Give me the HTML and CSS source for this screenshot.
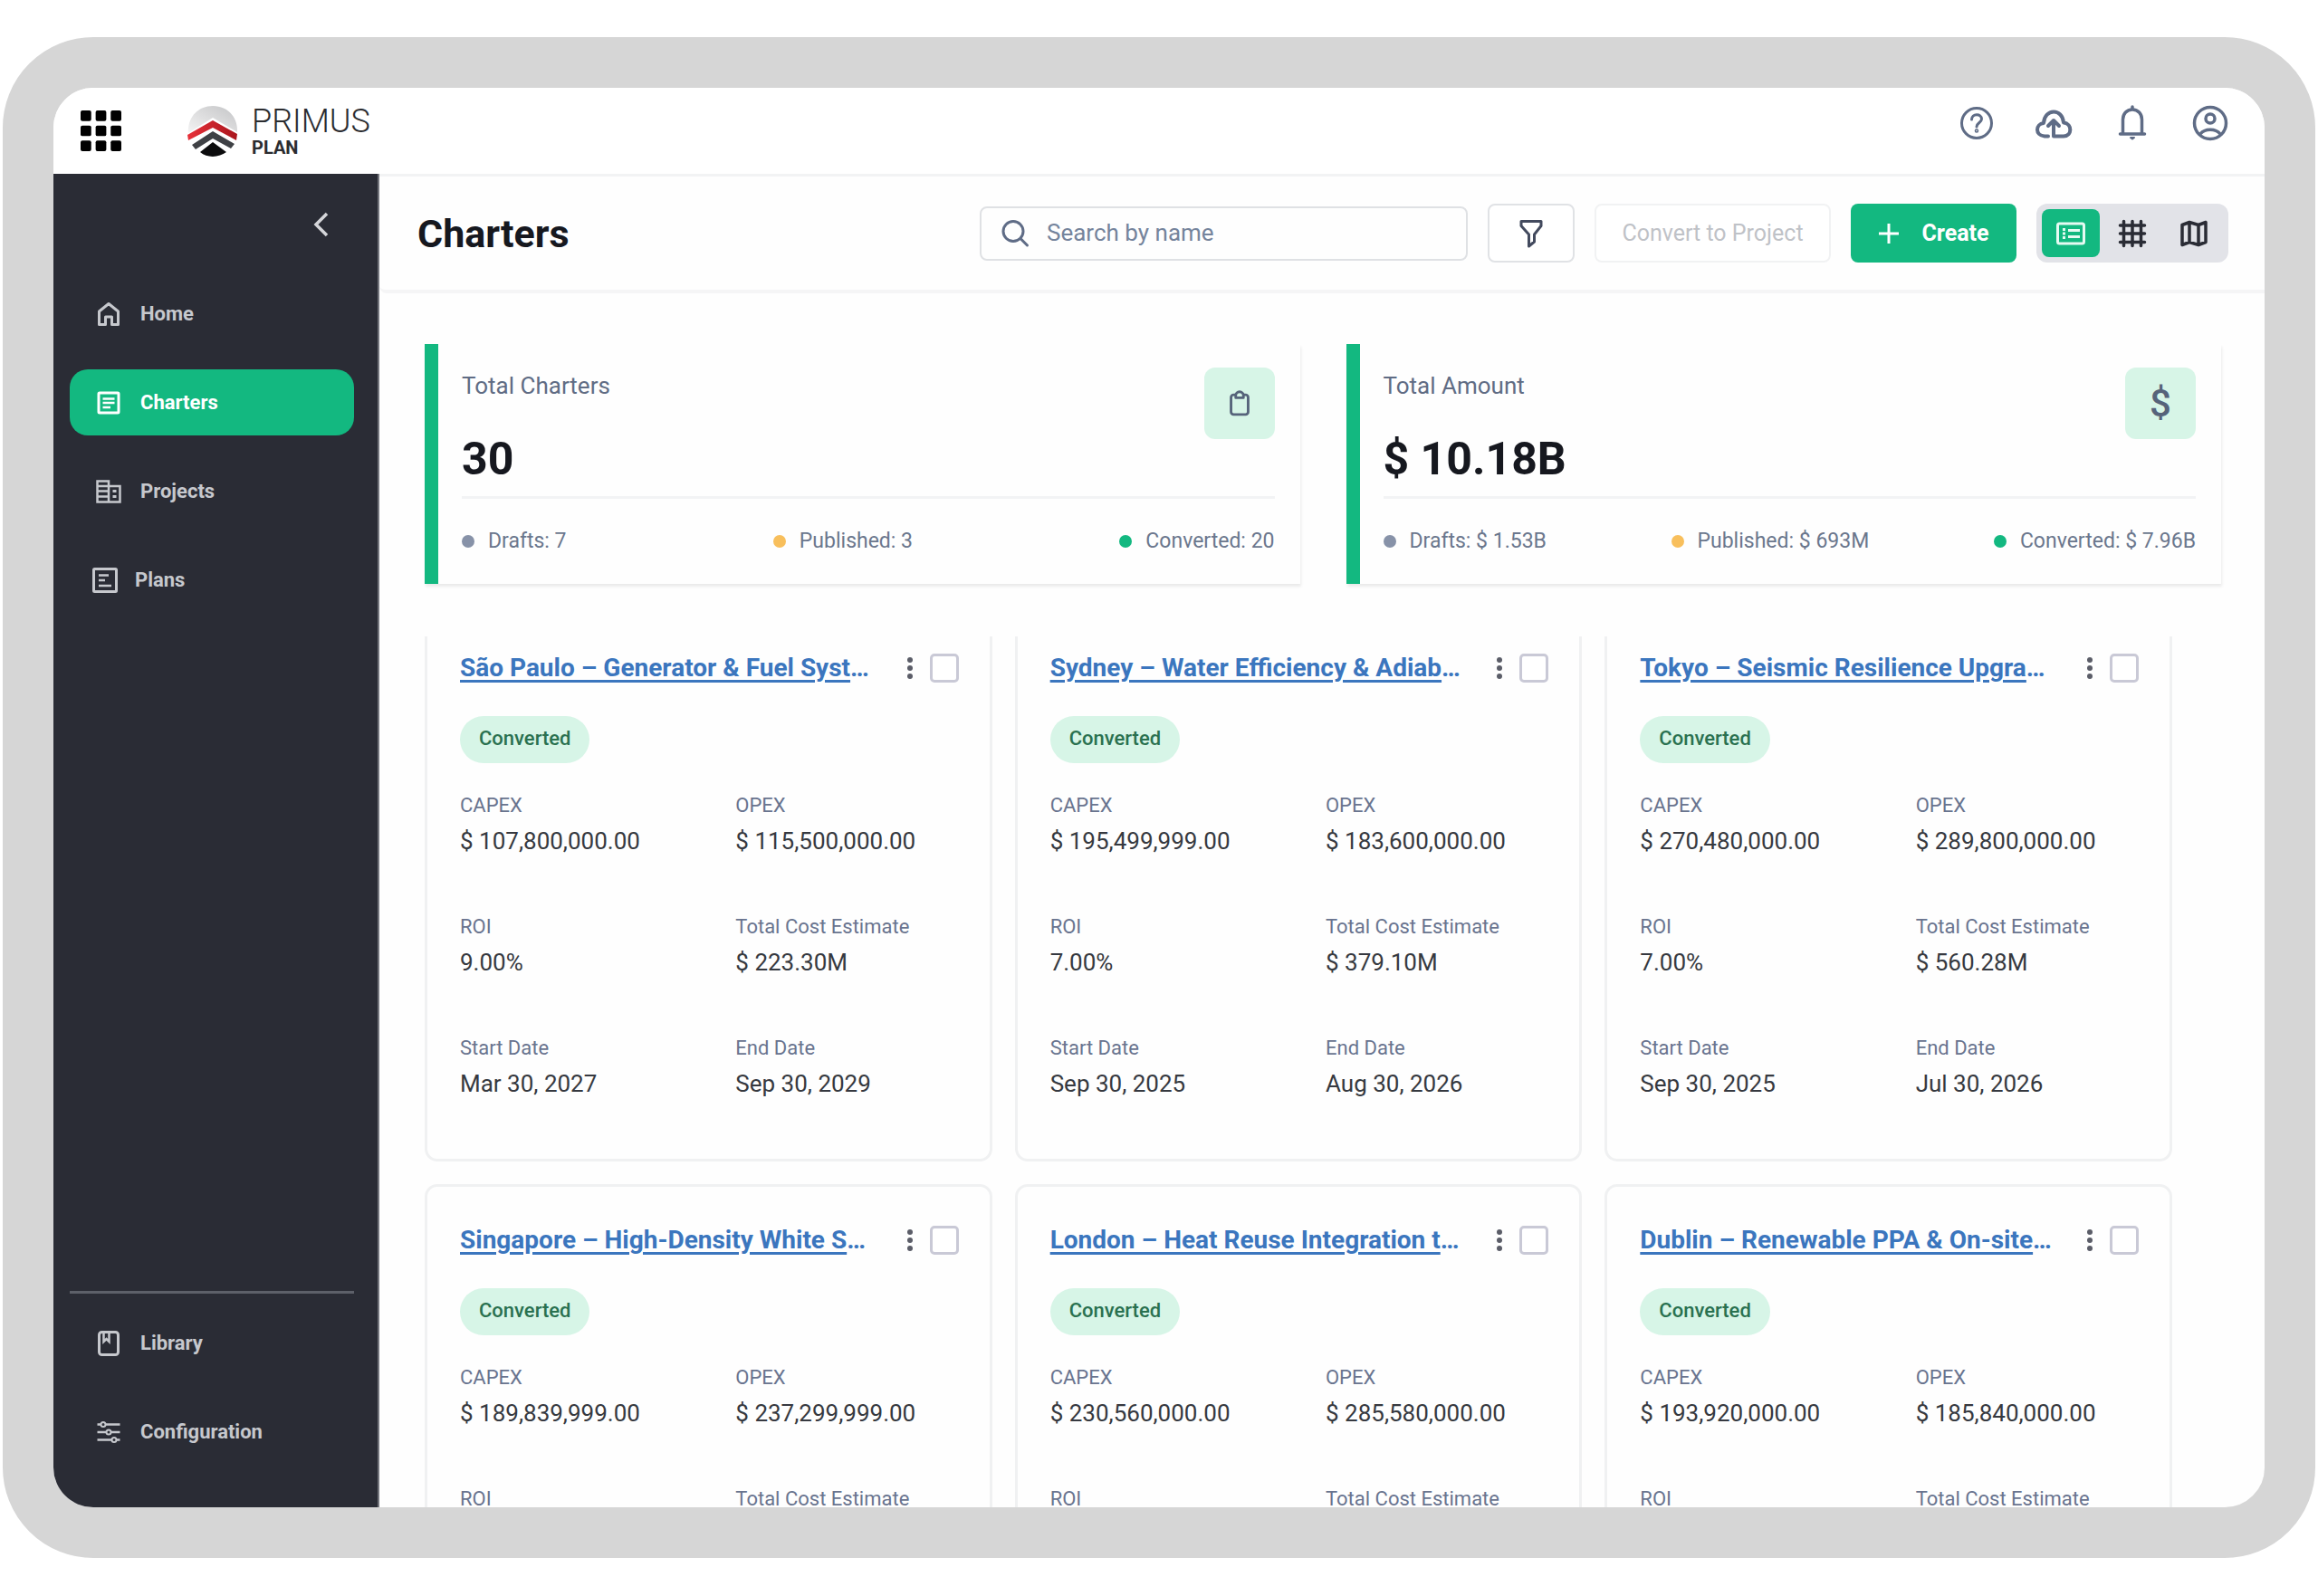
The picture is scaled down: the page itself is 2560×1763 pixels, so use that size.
FILE: index.html
```html
<!DOCTYPE html>
<html lang="en">
<head>
    <meta charset="UTF-8">
    <meta name="viewport" content="width=device-width, initial-scale=1.0">
    <title>Charters - Primus Plan</title>
    <link rel="stylesheet" href="styles.css">
</head>
<body>
    <div class="device">
        <header class="topbar">
            <button class="icon-button apps-button" aria-label="Apps">
                <svg width="45" height="45" viewBox="0 0 46 46" fill="#000">
                    <rect x="0" y="0" width="12" height="12" rx="2"/><rect x="17" y="0" width="12" height="12" rx="2"/><rect x="34" y="0" width="12" height="12" rx="2"/>
                    <rect x="0" y="17" width="12" height="12" rx="2"/><rect x="17" y="17" width="12" height="12" rx="2"/><rect x="34" y="17" width="12" height="12" rx="2"/>
                    <rect x="0" y="34" width="12" height="12" rx="2"/><rect x="17" y="34" width="12" height="12" rx="2"/><rect x="34" y="34" width="12" height="12" rx="2"/>
                </svg>
            </button>
            <a class="brand" href="#">
                <svg width="56" height="56" viewBox="0 0 56 56">
                    <defs>
                        <linearGradient id="dome" x1="0" y1="1" x2="1" y2="0">
                            <stop offset="0" stop-color="#f4f4f4"/>
                            <stop offset="0.5" stop-color="#dcdcdd"/>
                            <stop offset="1" stop-color="#c3c4c6"/>
                        </linearGradient>
                        <linearGradient id="red" x1="0" y1="0" x2="1" y2="0">
                            <stop offset="0" stop-color="#e8313a"/>
                            <stop offset="1" stop-color="#a9151c"/>
                        </linearGradient>
                    </defs>
                    <path d="M1 30C0 12 12 0 28 0s28 12 27 29L28 13z" fill="url(#dome)"/>
                    <path d="M0 32L28 16l27 15-1 7-26-14L1 38z" fill="url(#red)"/>
                    <path d="M5 43l23-15 24 14-4 5-20-11L9 48z" fill="#3f4145"/>
                    <path d="M14 51l14-11 15 11c-8 6-21 7-29 0z" fill="#0c0c0d"/>
                </svg>
                <span class="brand-text">
                    <span class="brand-name">PRIMUS</span>
                    <span class="brand-product">PLAN</span>
                </span>
            </a>
            <div class="topbar-actions">
                <button class="icon-button" aria-label="Help">
                    <svg width="44" height="44" viewBox="0 0 44 44" fill="none" stroke="#5f6c86" stroke-width="3" stroke-linecap="round">
                        <circle cx="22" cy="22" r="16.5"/>
                        <path d="M16.500 18c0-7 11-7 11-.5 0 4-5.500 4-5.500 8.500"/>
                        <circle cx="22" cy="30.500" r="0.800"/>
                    </svg>
                </button>
                <button class="icon-button" aria-label="Upload">
                    <svg width="44" height="44" viewBox="0 0 44 44" fill="none" stroke="#5f6c86" stroke-width="4" stroke-linecap="round" stroke-linejoin="round">
                        <path d="M15 36.500h-4C0 35.500 1 23 10 22 11 5.500 31 5.500 32 21.500c10 1 9.500 15 0 15H21V20"/>
                        <path d="M15 25l6-6 6 6"/>
                    </svg>
                </button>
                <button class="icon-button" aria-label="Notifications">
                    <svg width="44" height="44" viewBox="0 0 44 44" fill="none" stroke="#5f6c86" stroke-width="3.500" stroke-linecap="round" stroke-linejoin="round">
                        <path d="M8.500 34h27M11.500 33.500V18c0-6 4-11 10.500-11s10.500 5 10.500 11v15.500M22 6V4"/>
                        <path d="M20 38h4l-2 1.500z" fill="#5f6c86" stroke-width="2"/>
                    </svg>
                </button>
                <button class="icon-button" aria-label="Account">
                    <svg width="44" height="44" viewBox="0 0 44 44" fill="none" stroke="#5f6c86" stroke-width="3.500">
                        <circle cx="22" cy="22" r="17.500"/>
                        <circle cx="22" cy="17" r="5"/>
                        <path d="M11 34c5-6.500 17-6.500 22 0"/>
                    </svg>
                </button>
            </div>
        </header>

        <div class="workspace">
            <nav class="sidebar">
                <button class="icon-button collapse-button" aria-label="Collapse menu">
                    <svg width="20" height="30" viewBox="0 0 20 30" fill="none" stroke="#d5d6da" stroke-width="3.500"><path d="M16 3L4 15l12 12"/></svg>
                </button>
                <a class="nav-item" href="#">
                    <svg width="30" height="30" viewBox="0 0 30 30" fill="none" stroke="currentColor" stroke-width="3" stroke-linejoin="round">
                        <path d="M4.500 12L15 3.500 25.500 12v14.500h-7V18h-7v8.500h-7z"/>
                    </svg>
                    Home
                </a>
                <a class="nav-item active" href="#">
                    <svg width="30" height="30" viewBox="0 0 30 30" fill="none" stroke="currentColor" stroke-width="3">
                        <rect x="4" y="4" width="22" height="22" rx="1"/>
                        <path d="M8.500 10.500h13M8.500 15h13M8.500 20h8.500" stroke-width="2.500"/>
                    </svg>
                    Charters
                </a>
                <a class="nav-item" href="#">
                    <svg width="30" height="30" viewBox="0 0 30 30" fill="none" stroke="currentColor" stroke-width="2.500">
                        <path d="M2.500 3.500H15v23H2.500zM15 9h12.500v17.500H15M2.500 9H15M2.500 14.500H15M2.500 20.500H15"/>
                        <path d="M19.500 14.500h4M19.500 20.500h4" stroke-width="3"/>
                    </svg>
                    Projects
                </a>
                <a class="nav-item compact" href="#">
                    <svg width="30" height="30" viewBox="0 0 30 30" fill="none" stroke="currentColor" stroke-width="3">
                        <rect x="2.500" y="2.500" width="25" height="25" rx="1"/>
                        <path d="M8 9.500h11M8 15h7M8 21h14" stroke-width="2.500"/>
                    </svg>
                    Plans
                </a>
                <div class="nav-footer">
                    <a class="nav-item" href="#">
                        <svg width="30" height="30" viewBox="0 0 30 30" fill="none" stroke="currentColor" stroke-width="3">
                            <rect x="4.500" y="2.500" width="21" height="25" rx="3"/>
                            <path d="M9.500 3v10l3-3 3 3V3" stroke-width="2.500"/>
                        </svg>
                        Library
                    </a>
                    <a class="nav-item" href="#">
                        <svg width="30" height="30" viewBox="0 0 30 30" fill="none" stroke="currentColor" stroke-width="2.500">
                            <path d="M2.500 6.500H6M12 6.500h15.500M2.500 15H12M18 15h9.500M2.500 23.500H18M24 23.500h3.500"/>
                            <circle cx="9" cy="6.500" r="2.500" stroke-width="2"/><circle cx="15" cy="15" r="2.500" stroke-width="2"/><circle cx="21" cy="23.500" r="2.500" stroke-width="2"/>
                        </svg>
                        Configuration
                    </a>
                </div>
            </nav>

            <main class="main">
                <div class="page-header">
                    <h1>Charters</h1>
                    <label class="search">
                        <svg width="34" height="34" viewBox="0 0 34 34" fill="none" stroke="#5f6c86" stroke-width="3" stroke-linecap="round">
                            <circle cx="15" cy="14.500" r="11"/><path d="M23 22.500l7.500 7.500"/>
                        </svg>
                        <input type="text" placeholder="Search by name" aria-label="Search by name">
                    </label>
                    <button class="btn filter-button" aria-label="Filter">
                        <svg width="34" height="34" viewBox="0 0 34 34" fill="none" stroke="#434a5e" stroke-width="3" stroke-linejoin="round">
                            <path d="M6 3.500h22v5L20.500 18v8L14.500 31V18L6 8.500z"/>
                        </svg>
                    </button>
                    <button class="btn convert-button" disabled>Convert to Project</button>
                    <button class="btn create-button">
                        <svg width="24" height="24" viewBox="0 0 24 24" stroke="#fff" stroke-width="3"><path d="M12 1v22M1 12h22"/></svg>
                        Create
                    </button>
                    <div class="view-switch">
                        <button class="view-button selected" aria-label="Card view">
                            <svg width="34" height="34" viewBox="0 0 34 34" fill="none" stroke="currentColor" stroke-width="3">
                                <rect x="2.500" y="6" width="29" height="22" rx="2"/>
                                <path d="M8 12.500h3M8 17h3M8 21.500h3M14 13.500h13M14 20.500h13"/>
                            </svg>
                        </button>
                        <button class="view-button" aria-label="Table view">
                            <svg width="34" height="34" viewBox="0 0 34 34" fill="none" stroke="currentColor" stroke-width="3.500" stroke-linecap="round">
                                <path d="M7.500 3.500v27M17 3.500v27M26.500 3.500v27M3.500 8h27M3.500 17h27M3.500 26.500h27"/>
                            </svg>
                        </button>
                        <button class="view-button" aria-label="Map view">
                            <svg width="34" height="34" viewBox="0 0 34 34" fill="none" stroke="currentColor" stroke-width="3.500" stroke-linejoin="round">
                                <path d="M4 7.500l8-3 10 3 8-3v22l-8 3-10-3-8 3zM12 5v21M22 8v21"/>
                            </svg>
                        </button>
                    </div>
                </div>

                <section class="stats">
                    <div class="stat-card">
                        <div class="stat-top">
                            <div>
                                <h2>Total Charters</h2>
                                <p class="stat-value">30</p>
                            </div>
                            <span class="stat-icon">
                                <svg width="34" height="34" viewBox="0 0 36 36" fill="none" stroke="#56637a" stroke-width="3" stroke-linejoin="round">
                                    <rect x="8" y="7.500" width="20" height="23" rx="3"/>
                                    <path d="M13.500 8.500a4.500 4.500 0 0 1 9 0V11h-9z" fill="#d7f5e7"/>
                                </svg>
                            </span>
                        </div>
                        <ul class="stat-legend">
                            <li class="drafts">Drafts: 7</li>
                            <li class="published">Published: 3</li>
                            <li class="converted">Converted: 20</li>
                        </ul>
                    </div>
                    <div class="stat-card">
                        <div class="stat-top">
                            <div>
                                <h2>Total Amount</h2>
                                <p class="stat-value">$ 10.18B</p>
                            </div>
                            <span class="stat-icon">$</span>
                        </div>
                        <ul class="stat-legend">
                            <li class="drafts">Drafts: $ 1.53B</li>
                            <li class="published">Published: $ 693M</li>
                            <li class="converted">Converted: $ 7.96B</li>
                        </ul>
                    </div>
                </section>

                <!-- Scrolling list of charters -->
                <div class="charter-scroll">
                    <div class="charter-grid">
                        <article class="charter">
                            <div class="charter-head">
                                <h3><a href="#">São Paulo – Generator &amp; Fuel Syst</a>…</h3>
                                <button class="icon-button more-button" aria-label="More"><span></span><span></span><span></span></button>
                                <input type="checkbox" aria-label="Select São Paulo">
                            </div>
                            <span class="badge">Converted</span>
                            <dl>
                                <div><dt>CAPEX</dt><dd>$ 107,800,000.00</dd></div>
                                <div><dt>OPEX</dt><dd>$ 115,500,000.00</dd></div>
                                <div><dt>ROI</dt><dd>9.00%</dd></div>
                                <div><dt>Total Cost Estimate</dt><dd>$ 223.30M</dd></div>
                                <div><dt>Start Date</dt><dd>Mar 30, 2027</dd></div>
                                <div><dt>End Date</dt><dd>Sep 30, 2029</dd></div>
                            </dl>
                        </article>
                        <article class="charter">
                            <div class="charter-head">
                                <h3><a href="#">Sydney – Water Efficiency &amp; Adiab</a>…</h3>
                                <button class="icon-button more-button" aria-label="More"><span></span><span></span><span></span></button>
                                <input type="checkbox" aria-label="Select Sydney">
                            </div>
                            <span class="badge">Converted</span>
                            <dl>
                                <div><dt>CAPEX</dt><dd>$ 195,499,999.00</dd></div>
                                <div><dt>OPEX</dt><dd>$ 183,600,000.00</dd></div>
                                <div><dt>ROI</dt><dd>7.00%</dd></div>
                                <div><dt>Total Cost Estimate</dt><dd>$ 379.10M</dd></div>
                                <div><dt>Start Date</dt><dd>Sep 30, 2025</dd></div>
                                <div><dt>End Date</dt><dd>Aug 30, 2026</dd></div>
                            </dl>
                        </article>
                        <article class="charter">
                            <div class="charter-head">
                                <h3><a href="#">Tokyo – Seismic Resilience Upgra</a>…</h3>
                                <button class="icon-button more-button" aria-label="More"><span></span><span></span><span></span></button>
                                <input type="checkbox" aria-label="Select Tokyo">
                            </div>
                            <span class="badge">Converted</span>
                            <dl>
                                <div><dt>CAPEX</dt><dd>$ 270,480,000.00</dd></div>
                                <div><dt>OPEX</dt><dd>$ 289,800,000.00</dd></div>
                                <div><dt>ROI</dt><dd>7.00%</dd></div>
                                <div><dt>Total Cost Estimate</dt><dd>$ 560.28M</dd></div>
                                <div><dt>Start Date</dt><dd>Sep 30, 2025</dd></div>
                                <div><dt>End Date</dt><dd>Jul 30, 2026</dd></div>
                            </dl>
                        </article>
                        <article class="charter">
                            <div class="charter-head">
                                <h3><a href="#">Singapore – High-Density White S</a>…</h3>
                                <button class="icon-button more-button" aria-label="More"><span></span><span></span><span></span></button>
                                <input type="checkbox" aria-label="Select Singapore">
                            </div>
                            <span class="badge">Converted</span>
                            <dl>
                                <div><dt>CAPEX</dt><dd>$ 189,839,999.00</dd></div>
                                <div><dt>OPEX</dt><dd>$ 237,299,999.00</dd></div>
                                <div><dt>ROI</dt></div>
                                <div><dt>Total Cost Estimate</dt></div>
                            </dl>
                        </article>
                        <article class="charter">
                            <div class="charter-head">
                                <h3><a href="#">London – Heat Reuse Integration t</a>…</h3>
                                <button class="icon-button more-button" aria-label="More"><span></span><span></span><span></span></button>
                                <input type="checkbox" aria-label="Select London">
                            </div>
                            <span class="badge">Converted</span>
                            <dl>
                                <div><dt>CAPEX</dt><dd>$ 230,560,000.00</dd></div>
                                <div><dt>OPEX</dt><dd>$ 285,580,000.00</dd></div>
                                <div><dt>ROI</dt></div>
                                <div><dt>Total Cost Estimate</dt></div>
                            </dl>
                        </article>
                        <article class="charter">
                            <div class="charter-head">
                                <h3><a href="#">Dublin – Renewable PPA &amp; On-site</a>…</h3>
                                <button class="icon-button more-button" aria-label="More"><span></span><span></span><span></span></button>
                                <input type="checkbox" aria-label="Select Dublin">
                            </div>
                            <span class="badge">Converted</span>
                            <dl>
                                <div><dt>CAPEX</dt><dd>$ 193,920,000.00</dd></div>
                                <div><dt>OPEX</dt><dd>$ 185,840,000.00</dd></div>
                                <div><dt>ROI</dt></div>
                                <div><dt>Total Cost Estimate</dt></div>
                            </dl>
                        </article>
                    </div>
                </div>
            </main>
        </div>
    </div>
</body>
</html>
```
FILE: styles.css
```css
* {
    box-sizing: border-box;
}

body {
    margin: 0;
    height: 100vh;
    padding: 41px 3px 42px;
    background-color: #fff;
    font-family: Roboto, sans-serif;
    color: #16181f;
}

h1, h2, h3, p, ul, dl, dd {
    margin: 0;
    padding: 0;
}

button, input {
    font-family: inherit;
}

svg {
    flex-shrink: 0;
}

.device {
    display: flex;
    flex-direction: column;
    height: 100%;
    border: 56px solid #d6d6d6;
    border-radius: 100px;
    overflow: hidden;
    background-color: #fefefe;
}

.icon-button {
    display: flex;
    padding: 0;
    border: none;
    background: none;
    cursor: pointer;
}

/* Top bar */
.topbar {
    display: flex;
    align-items: center;
    height: 95px;
    padding: 0 38px 0 30px;
    background-color: #fff;
    flex-shrink: 0;
}

.brand {
    display: flex;
    align-items: center;
    gap: 15px;
    margin-left: 73px;
    color: #2b2c30;
    text-decoration: none;
}

.brand-text {
    display: flex;
    flex-direction: column;
}

.brand-name {
    font-size: 36px;
    line-height: 36px;
    font-weight: 300;
}

.brand-product {
    font-size: 20px;
    line-height: 22px;
    font-weight: 700;
}

.topbar-actions {
    display: flex;
    gap: 42px;
    margin-left: auto;
    padding-bottom: 18px;
}

.workspace {
    display: flex;
    flex: 1;
    min-height: 0;
}

/* Sidebar */
.sidebar {
    display: flex;
    flex-direction: column;
    gap: 25px;
    width: 360px;
    padding: 41px 26px 22px 18px;
    background-color: #2a2c35;
    border-right: 2px solid #73757c;
    flex-shrink: 0;
}

.collapse-button {
    align-self: flex-end;
    margin: 0 26px 22px 0;
}

.nav-item {
    display: flex;
    align-items: center;
    gap: 20px;
    height: 73px;
    padding: 0 28px;
    border-radius: 20px;
    color: #c6c8cd;
    font-size: 22px;
    font-weight: 700;
    text-decoration: none;
}

.nav-item.compact {
    gap: 18px;
    padding-left: 24px;
}

.nav-item.active {
    background-color: #13b880;
    color: #fff;
}

.nav-footer {
    display: flex;
    flex-direction: column;
    gap: 25px;
    margin-top: auto;
    padding-top: 18px;
    border-top: 3px solid #5d6069;
    padding-bottom: 25px;
}

/* Page header */
.main {
    display: flex;
    flex-direction: column;
    flex: 1;
    min-width: 0;
}

.page-header {
    display: flex;
    align-items: center;
    gap: 22px;
    height: 132px;
    padding: 0 40px 0 42px;
    border-top: 3px solid #f2f3f4;
    border-bottom: 4px solid #f5f5f6;
    border-bottom-left-radius: 8px;
    flex-shrink: 0;
}

h1 {
    margin-right: auto;
    font-size: 43px;
    font-weight: 700;
}

.search {
    display: flex;
    align-items: center;
    gap: 18px;
    width: 539px;
    height: 60px;
    padding: 0 20px;
    border: 2px solid #dfe1e4;
    border-radius: 8px;
}

.search input {
    flex: 1;
    min-width: 0;
    padding: 0 0 2px;
    border: none;
    outline: none;
    background: none;
    font-size: 26px;
}

.search input::placeholder {
    color: #75849c;
}

.btn {
    display: flex;
    align-items: center;
    justify-content: center;
    height: 65px;
    border: 2px solid #e0e2e5;
    border-radius: 8px;
    background-color: #fff;
    font-size: 25px;
    cursor: pointer;
}

.filter-button {
    width: 96px;
}

.convert-button {
    width: 261px;
    padding: 0;
    border-color: #f1f2f3;
    color: #bfc2c7;
}

.create-button {
    gap: 24px;
    width: 183px;
    padding: 0;
    border: none;
    background-color: #13b880;
    color: #fff;
    font-weight: 700;
}

.view-switch {
    display: flex;
    align-items: center;
    gap: 4px;
    height: 65px;
    padding: 6px;
    border-radius: 12px;
    background-color: #e2e3e8;
}

.view-button {
    display: flex;
    align-items: center;
    justify-content: center;
    width: 64px;
    height: 53px;
    padding: 0;
    border: none;
    border-radius: 8px;
    background: none;
    color: #2a2c35;
    cursor: pointer;
}

.view-button.selected {
    background-color: #13b880;
    color: #e6faf2;
}

/* Summary cards */
.stats {
    display: grid;
    grid-template-columns: 1fr 1fr;
    gap: 51px;
    padding: 56px 48px 58px 50px;
}

.stat-card {
    padding: 26px 28px 31px 26px;
    border-left: 15px solid #13b880;
    background-color: #fefefe;
    box-shadow: 1px 3px 3px rgba(0, 0, 0, 0.08);
}

.stat-top {
    display: flex;
    justify-content: space-between;
    align-items: flex-start;
    height: 145px;
    border-bottom: 3px solid #f2f3f5;
}

.stat-card h2 {
    padding-top: 4px;
    font-size: 26px;
    line-height: 32px;
    font-weight: 400;
    color: #606c84;
}

.stat-value {
    padding-top: 35px;
    font-size: 50px;
    line-height: 60px;
    font-weight: 700;
}

.stat-icon {
    display: flex;
    align-items: center;
    justify-content: center;
    width: 78px;
    height: 79px;
    border-radius: 12px;
    background-color: #d7f5e7;
    color: #56637a;
    font-size: 42px;
    font-weight: 500;
}

.stat-legend {
    display: flex;
    justify-content: space-between;
    padding-top: 31px;
    list-style: none;
    font-size: 23px;
    line-height: 32px;
    color: #6b778d;
}

.stat-legend li {
    display: flex;
    align-items: center;
    gap: 15px;
}

.stat-legend li::before {
    content: "";
    width: 14px;
    height: 14px;
    border-radius: 50%;
    background-color: #8792a8;
}

.stat-legend .published::before {
    background-color: #f8bf5c;
}

.stat-legend .converted::before {
    background-color: #13b880;
}

/* Charter cards */
.charter-scroll {
    flex: 1;
    min-height: 0;
    margin-left: 50px;
    padding-right: 102px;
    overflow: hidden;
}

.charter-grid {
    display: grid;
    grid-template-columns: repeat(3, 1fr);
    grid-auto-rows: 607px;
    gap: 25px;
    margin-top: -27px;
}

.charter {
    padding: 43px 34px 43px 36px;
    border: 3px solid #f0f1f2;
    border-radius: 14px;
}

.charter-head {
    display: flex;
    align-items: center;
    height: 32px;
}

.charter-head h3 {
    flex: 1;
    font-size: 28px;
    line-height: 32px;
    font-weight: 700;
    color: #3b76be;
    white-space: nowrap;
}

.charter-head a {
    color: inherit;
    text-decoration-thickness: 3px;
    text-underline-offset: 4px;
}

.more-button {
    flex-direction: column;
    gap: 3px;
    padding: 4px;
    margin-right: 15px;
}

.more-button span {
    width: 6px;
    height: 6px;
    border-radius: 50%;
    background-color: #5b5d68;
}

.charter-head input {
    appearance: none;
    width: 32px;
    height: 32px;
    margin: 0;
    border: 3px solid #c9c9d6;
    border-radius: 5px;
    background-color: #fff;
}

.badge {
    display: block;
    width: fit-content;
    margin-top: 37px;
    padding: 0 21px 2px;
    border-radius: 26px;
    background-color: #d7f5e7;
    color: #2a7150;
    font-size: 22px;
    line-height: 50px;
    font-weight: 500;
}

.charter dl {
    display: grid;
    grid-template-columns: 1fr 1fr;
    gap: 66px 58px;
    margin-top: 33px;
}

.charter dt {
    font-size: 22px;
    line-height: 28px;
    color: #69748f;
}

.charter dd {
    padding-top: 10px;
    font-size: 26px;
    line-height: 30px;
    color: #363940;
    white-space: nowrap;
}
```
